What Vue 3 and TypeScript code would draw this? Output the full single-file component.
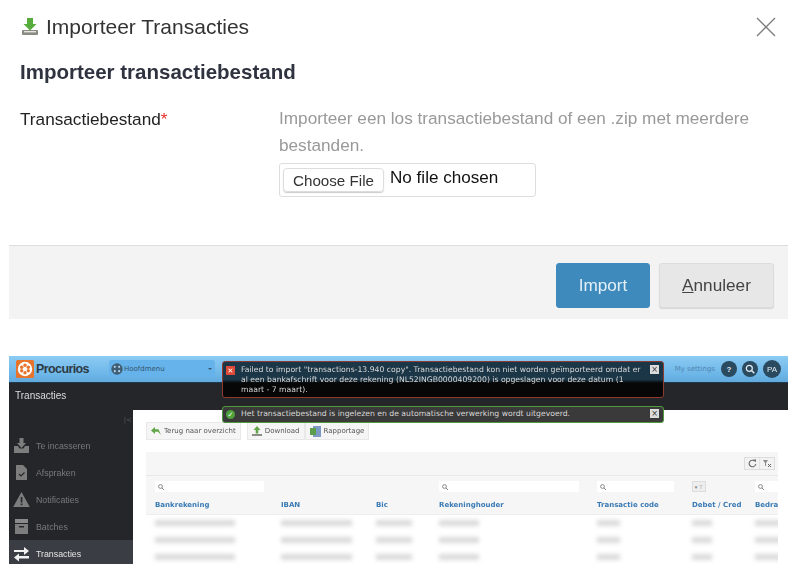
<script setup lang="ts">
interface Col { label: string; filter: string; w: number; fw: number }
const cols: Col[] = [
  { label: 'Bankrekening', filter: 'search', w: 80, fw: 109 },
  { label: 'IBAN', filter: 'none', w: 71, fw: 0 },
  { label: 'Bic', filter: 'none', w: 36, fw: 0 },
  { label: 'Rekeninghouder', filter: 'search', w: 40, fw: 140 },
  { label: 'Transactie code', filter: 'search', w: 23, fw: 77 },
  { label: 'Debet / Cred', filter: 'select', w: 20, fw: 14 },
  { label: 'Bedrag', filter: 'search', w: 30, fw: 60 },
]
const rows = [0, 1, 2]
const menu = [
  { label: 'Te incasseren', icon: 'tray', active: false },
  { label: 'Afspraken', icon: 'doc', active: false },
  { label: 'Notificaties', icon: 'warn', active: false },
  { label: 'Batches', icon: 'box', active: false },
  { label: 'Transacties', icon: 'swap', active: true },
]
</script>

<template>
  <div class="page">
    <header class="head">
      <svg class="head-icon" width="18" height="19" viewBox="0 0 18 19">
        <rect x="1" y="13" width="16" height="5" rx="1" fill="#8b8b84" />
        <rect x="3" y="14" width="12" height="1.4" fill="#e4e4e0" />
        <path d="M6 1h6v6h3.5L9 13.6 2.500 7H6z" fill="#58ac3c" />
      </svg>
      <span class="head-title">Importeer Transacties</span>
      <svg class="close" width="20" height="20" viewBox="0 0 20 20">
        <path d="M1 1l18 18M19 1L1 19" stroke="#7c7c7c" stroke-width="1.300" fill="none" />
      </svg>
    </header>

    <h2 class="sub">Importeer transactiebestand</h2>

    <div class="form">
      <label class="lbl">Transactiebestand<span class="req">*</span></label>
      <div class="field">
        <p class="help">Importeer een los transactiebestand of een .zip met meerdere bestanden.</p>
        <div class="file">
          <span class="choose">Choose File</span>
          <span class="nofile">No file chosen</span>
        </div>
      </div>
    </div>

    <footer class="foot">
      <button class="btn primary">Import</button>
      <button class="btn second"><u>A</u>nnuleer</button>
    </footer>

    <section class="shot">
      <div class="topbar">
        <svg class="logo" width="18" height="18" viewBox="0 0 18 18">
          <rect width="18" height="18" rx="1.500" fill="#e8742c" />
          <circle cx="9" cy="9" r="7.200" fill="#fff" />
          <circle cx="9" cy="5.300" r="1.700" fill="#e8742c" />
          <circle cx="9" cy="12.700" r="1.700" fill="#e8742c" />
          <circle cx="5.700" cy="7.200" r="1.700" fill="#e8742c" />
          <circle cx="12.300" cy="7.200" r="1.700" fill="#e8742c" />
          <circle cx="5.700" cy="10.800" r="1.700" fill="#e8742c" />
          <circle cx="12.300" cy="10.800" r="1.700" fill="#e8742c" />
        </svg>
        <span class="brand">Procurios</span>
        <div class="mainmenu">
          <svg width="12" height="12" viewBox="0 0 11 11">
            <circle cx="5.500" cy="5.500" r="5.200" fill="#3f5d73" />
            <circle cx="3.500" cy="3.500" r="1" fill="#b5d5ec" />
            <circle cx="7.500" cy="3.500" r="1" fill="#b5d5ec" />
            <circle cx="3.500" cy="7.500" r="1" fill="#b5d5ec" />
            <circle cx="7.500" cy="7.500" r="1" fill="#b5d5ec" />
          </svg>
          <span class="mm-text">Hoofdmenu</span>
          <span class="mm-caret"></span>
        </div>
        <span class="settings">My settings</span>
        <span class="round">?</span>
        <span class="round">
          <svg width="10" height="10" viewBox="0 0 10 10">
            <circle cx="4.300" cy="4.300" r="3" fill="none" stroke="#dfe8ee" stroke-width="1.300" />
            <path d="M6.500 6.500L9.300 9.300" stroke="#dfe8ee" stroke-width="1.500" />
          </svg>
        </span>
        <span class="round big">PA</span>
      </div>
      <div class="titlebar">Transacties</div>
      <div class="body">
        <aside class="side">
          <div class="collapse">|&lt;</div>
          <div v-for="m in menu" :key="m.label" class="item" :class="{ on: m.active }">
            <svg class="item-ic" width="17" height="17" viewBox="0 0 17 17">
              <g v-if="m.icon === 'tray'" fill="#7d7d7d">
                <path d="M1 9h4l1.500 2.500h4L12 9h4v7H1z" />
                <path d="M6.500 1h4v5H13l-4.500 5L4 6h2.500z" />
              </g>
              <g v-else-if="m.icon === 'doc'">
                <path d="M3 1h7l4 4v11H3z" fill="#7d7d7d" />
                <path d="M6 10l2 2 3.500-3.500" stroke="#26282b" stroke-width="1.200" fill="none" />
              </g>
              <g v-else-if="m.icon === 'warn'">
                <path d="M8.500 1L16.800 16H.2z" fill="#7d7d7d" />
                <rect x="7.700" y="6" width="1.700" height="5.500" fill="#26282b" />
                <rect x="7.700" y="12.500" width="1.700" height="1.700" fill="#26282b" />
              </g>
              <g v-else-if="m.icon === 'box'">
                <rect x="2" y="1" width="13" height="4" fill="#8a8a8a" />
                <rect x="2" y="6" width="13" height="10" fill="#7d7d7d" />
                <rect x="6" y="8" width="5" height="1.500" fill="#26282b" />
              </g>
              <g v-else fill="#f1f1f1">
                <path d="M1 5h10V2l5 4-5 4V7H1z" />
                <path d="M16 11H6V8.500L1 12.500 6 16.500V13.500h10z" />
              </g>
            </svg>
            <span>{{ m.label }}</span>
          </div>
        </aside>
        <main class="content">
          <div class="toolbar">
            <div class="tool">
              <svg width="10" height="8" viewBox="0 0 10 8"><path d="M4 0v2.200h3.500L10 8 7 4.800H4V7L0 3.500z" fill="#62a64a" /></svg>
              Terug naar overzicht
            </div>
            <div class="group">
              <div class="tool">
                <svg width="10" height="10" viewBox="0 0 10 10"><path d="M5 0l3.500 4H6.300v3.500H3.700V4H1.500z" fill="#62a64a" /><rect y="8" width="10" height="2" fill="#8d8d88" /></svg>
                Download
              </div>
              <div class="tool">
                <svg width="11" height="11" viewBox="0 0 11 11"><rect x="3" width="8" height="11" fill="#7d9ac4" /><rect y="2" width="6" height="7" fill="#5d9e4d" /></svg>
                Rapportage
              </div>
            </div>
          </div>
          <div class="grid">
            <div class="grid-top">
              <div class="mini">
                <span class="mini-b">
                  <svg width="9" height="9" viewBox="0 0 9 9"><path d="M6.800 2.200A3.300 3.300 0 1 0 7.700 5" fill="none" stroke="#666" stroke-width="1.100" /><path d="M5.200 .5h2.800v2.800z" fill="#666" /></svg>
                </span>
                <span class="mini-b">
                  <svg width="9" height="8" viewBox="0 0 9 8"><path d="M0 0h5L3 3v3H2V3z" fill="#8e8e8e" /><path d="M5 4l3 3M8 4L5 7" stroke="#666" stroke-width="1" /></svg>
                </span>
              </div>
            </div>
            <div class="cols filters">
              <div v-for="c in cols" :key="c.label" class="cell">
                <span v-if="c.filter === 'search'" class="sbox" :style="{ width: c.fw + 'px' }">
                  <svg width="6" height="6" viewBox="0 0 6 6"><circle cx="2.500" cy="2.500" r="1.900" fill="none" stroke="#888" /><path d="M4 4l2 2" stroke="#888" /></svg>
                </span>
                <span v-else-if="c.filter === 'select'" class="selbox">▾ ⊤</span>
              </div>
            </div>
            <div class="cols heads">
              <div v-for="c in cols" :key="c.label" class="cell th">{{ c.label }}</div>
            </div>
          </div>
          <div v-for="r in rows" :key="r" class="cols row">
            <div v-for="c in cols" :key="c.label" class="cell">
              <span class="smear" :style="{ width: c.w + 'px' }"></span>
            </div>
          </div>
        </main>
      </div>

      <div class="note err">
        <span class="n-ic red">✕</span>
        <p>Failed to import "transactions-13.940 copy". Transactiebestand kon niet worden geïmporteerd omdat er al een bankafschrift voor deze rekening (NL52INGB0000409200) is opgeslagen voor deze datum (1 maart - 7 maart).</p>
        <span class="n-x">×</span>
      </div>
      <div class="note ok">
        <span class="n-ic green">✓</span>
        <p>Het transactiebestand is ingelezen en de automatische verwerking wordt uitgevoerd.</p>
        <span class="n-x">×</span>
      </div>
    </section>
  </div>
</template>

<style scoped>
.page {
  width: 800px;
  height: 564px;
  overflow: hidden;
  background: #fff;
  font-family: "Liberation Sans", Arial, sans-serif;
  color: #2a2a2a;
}
.head {
  display: flex;
  align-items: center;
  height: 54px;
  padding: 0 24px 0 21px;
  filter: blur(0.4px);
}
.head-icon { margin-right: 7px; margin-top: -2px; }
.head-title { font-size: 21px; color: #333; flex: 1; }
.sub {
  margin: 7px 0 0 20px;
  font-size: 20.500px;
  line-height: 22px;
  font-weight: 700;
  color: #2f3340;
  filter: blur(0.4px);
}
.form {
  display: flex;
  margin-top: 22px;
  padding-left: 20px;
  filter: blur(0.4px);
}
.lbl { width: 259px; font-size: 17.200px; line-height: 29px; color: #222; }
.req { color: #e8302a; }
.field { width: 490px; }
.help { margin: 0; font-size: 17.200px; line-height: 27px; color: #999; }
.file {
  display: flex;
  align-items: center;
  box-sizing: border-box;
  width: 257px;
  height: 34px;
  margin-top: 4px;
  padding-left: 3px;
  border: 1px solid #ddd;
  border-radius: 3px;
}
.choose {
  box-sizing: border-box;
  width: 101px;
  height: 24px;
  line-height: 23px;
  text-align: center;
  font-size: 15.200px;
  color: #333;
  border: 1px solid #ddd;
  border-radius: 4px;
  box-shadow: 0 1px 1px #ccc;
}
.nofile { margin: -4px 0 0 6px; font-size: 17.100px; color: #111; }
.foot {
  display: flex;
  align-items: flex-start;
  justify-content: flex-end;
  gap: 9px;
  box-sizing: border-box;
  width: 779px;
  height: 74px;
  margin: 48px 0 0 9px;
  padding: 17px 14px 0 0;
  background: #f3f3f3;
  border-top: 1px solid #ddd;
  filter: blur(0.4px);
}
.btn {
  height: 45px;
  font: 17.200px "Liberation Sans", Arial, sans-serif;
  border-radius: 3px;
  padding: 0;
}
.primary { width: 94px; background: #3e8abd; border: 1px solid #3e8abd; color: #e4f0f8; }
.second { width: 115px; background: #e7e7e7; border: 1px solid #dcdcdc; color: #444; box-shadow: 0 1px 1px #d5d5d5; }

.shot {
  position: relative;
  width: 779px;
  height: 208px;
  margin: 37px 0 0 9px;
  overflow: hidden;
  filter: blur(0.6px);
  font-family: "DejaVu Sans", sans-serif;
}
.topbar {
  display: flex;
  align-items: center;
  height: 27px;
  padding: 0 7px;
  background: linear-gradient(#8ccbf3, #6db6e8 70%, #62a9dc);
  box-sizing: border-box;
  border-bottom: 1px solid #1f3a4e;
}
.logo { flex: none; }
.brand {
  margin-left: 2px;
  width: 73px;
  font: 700 12.500px "Liberation Sans", Arial, sans-serif;
  letter-spacing: -0.6px;
  color: #2d3a45;
}
.mainmenu {
  display: flex;
  align-items: center;
  box-sizing: border-box;
  width: 106px;
  height: 18px;
  padding-left: 2px;
  border-radius: 3px;
  background: #66b2ea;
}
.mm-text { margin-left: 1px; flex: 1; font-size: 7px; color: #34556e; }
.mm-caret {
  width: 0;
  height: 0;
  margin-right: 3px;
  border: 2px solid transparent;
  border-top: 2px solid #34556e;
  border-bottom: 0;
}
.settings { margin-left: auto; margin-right: 0; font-size: 7px; color: #4f86b0; }
.round {
  display: flex;
  align-items: center;
  justify-content: center;
  flex: none;
  width: 16px;
  height: 16px;
  margin-left: 5px;
  border-radius: 50%;
  background: #2a4a60;
  font: 700 8px "Liberation Sans", Arial, sans-serif;
  color: #e4ecf2;
}
.settings + .round { margin-left: 6px; }
.big { width: 18px; height: 18px; font-weight: 400; }
.titlebar {
  height: 27px;
  padding-left: 6px;
  background: #24262a;
  font: 10px/25px "Liberation Sans", Arial, sans-serif;
  color: #dcdcdc;
}
.body { display: flex; height: 154px; }
.side { position: relative; flex: none; width: 124px; background: #24262a; padding-top: 22px; box-sizing: border-box; }
.collapse { position: absolute; top: 6px; right: 1px; font-size: 7px; color: #555; }
.item {
  display: flex;
  align-items: center;
  height: 27px;
  padding-left: 4px;
  font: 8.800px "Liberation Sans", Arial, sans-serif;
  color: #7a7a7a;
}
.item-ic { margin-right: 6px; flex: none; }
.item.on { background: #3a3d44; color: #e4e4e4; }
.content { flex: 1; min-width: 0; background: #fff; padding: 12px 10px 0 13px; overflow: hidden; }
.toolbar { display: flex; gap: 6px; height: 18px; }
.group { display: flex; }
.tool {
  display: flex;
  align-items: center;
  gap: 3px;
  padding: 0 4px;
  background: #f5f5f5;
  border: 1px solid #e8e8e8;
  font-size: 7px;
  color: #555;
  white-space: nowrap;
}
.grid { margin-top: 12px; background: #f6f6f6; border-bottom: 1px solid #eee; overflow: hidden; }
.grid-top {
  display: flex;
  justify-content: flex-end;
  align-items: center;
  height: 23px;
  padding-right: 3px;
  border-bottom: 1px solid #e9e9e9;
}
.mini { display: flex; border: 1px solid #ddd; }
.mini-b {
  display: flex;
  align-items: center;
  justify-content: center;
  width: 14px;
  height: 11px;
  background: #f2f2f2;
}
.mini-b + .mini-b { border-left: 1px solid #e4e4e4; }
.cols {
  display: grid;
  grid-template-columns: 126px 95px 63px 158px 95px 63px 60px;
  padding-left: 9px;
  overflow: hidden;
}
.filters { box-sizing: border-box; padding-top: 5px; height: 17px; }
.cell { min-width: 0; white-space: nowrap; }
.sbox {
  display: flex;
  align-items: center;
  box-sizing: border-box;
  height: 11px;
  padding-left: 3px;
  background: #fff;
  border-radius: 1px;
}
.selbox {
  display: block;
  width: 14px;
  height: 11px;
  font-size: 5px;
  line-height: 11px;
  text-align: center;
  color: #777;
  background: #eee;
  border: 1px solid #ddd;
  box-sizing: border-box;
}
.heads { box-sizing: border-box; height: 21px; padding-top: 8px; align-items: start; }
.th { font-size: 7px; line-height: 9px; font-weight: 700; color: #3a7ab5; }
.row { box-sizing: border-box; height: 17px; padding-top: 5px; align-items: start; }
.smear {
  display: block;
  height: 6px;
  background: #dadada;
  filter: blur(2px);
}
.note {
  position: absolute;
  left: 213px;
  display: flex;
  box-sizing: border-box;
  width: 442px;
  padding: 3px 3px 2px;
  border-radius: 3px;
  font-size: 7.700px;
  line-height: 10px;
  color: #d8d8d8;
}
.note p { margin: 0; flex: 1; }
.err {
  top: 5px;
  height: 37px;
  background: linear-gradient(#1b3647 0 50%, #070707 60%);
  border: 1px solid #8e3a2e;
}
.ok {
  top: 50px;
  height: 17px;
  padding-top: 2px;
  background: #3a3a3a;
  border: 1px solid #4f9a3d;
}
.n-ic {
  display: flex;
  align-items: center;
  justify-content: center;
  flex: none;
  width: 9px;
  height: 9px;
  margin: 1px 6px 0 0;
  font-size: 7px;
  color: #fff;
}
.red { background: #dd4a38; }
.green { background: #4fa23a; border-radius: 50%; }
.n-x {
  flex: none;
  width: 9px;
  height: 9px;
  margin: 0 1px 0 4px;
  background: #dcdcdc;
  color: #333;
  font-size: 8px;
  line-height: 9px;
  text-align: center;
}
</style>
